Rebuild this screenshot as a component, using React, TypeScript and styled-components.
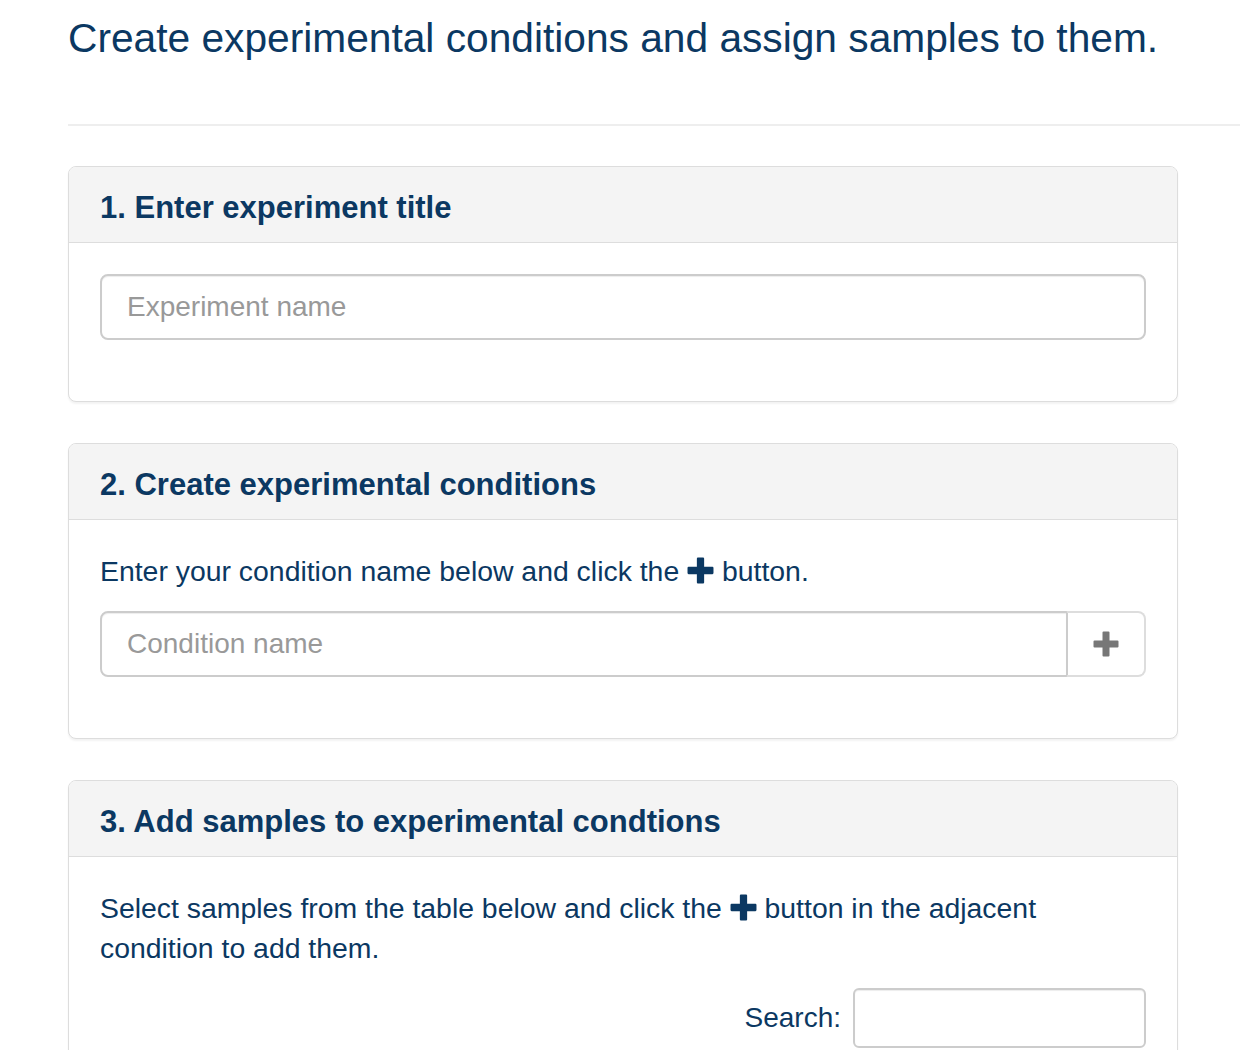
import React from 'react';
import styled, {createGlobalStyle} from "styled-components";

const GlobalStyle = createGlobalStyle`
  html, body {
    margin: 0;
    padding: 0;
    background: #fff;
  }
  body {
    font-family: "Liberation Sans", Arial, sans-serif;
    color: #0b3862;
    overflow: hidden;
  }
`

const ink = "#0b3862";

const PlusIcon = ({size, color}: { size: number, color: string }) => (
    <svg width={size} height={size} viewBox="0 0 26 26" aria-hidden="true">
      <path
          d="M9.5 1.5 Q9.5 0.5 10.5 0.5 H15.5 Q16.5 0.5 16.5 1.5 V9.5 H24.5 Q25.5 9.5 25.5 10.5 V15.5 Q25.5 16.5 24.5 16.5 H16.5 V24.5 Q16.5 25.5 15.5 25.5 H10.5 Q9.5 25.5 9.5 24.5 V16.5 H1.5 Q0.5 16.5 0.5 15.5 V10.5 Q0.5 9.5 1.5 9.5 H9.5 Z"
          fill={color}/>
    </svg>
);

const Panel = ({title, children}: { title: string, children: React.ReactNode }) => (
    <StyledPanel>
      <PanelHeading>
        <PanelTitle>{title}</PanelTitle>
      </PanelHeading>
      <PanelBody>{children}</PanelBody>
    </StyledPanel>
);

export default function App() {
  return (
      <Page>
        <GlobalStyle/>
        <PageTitle>Create experimental conditions and assign samples to them.</PageTitle>
        <Rule/>
        <Panels>
          <Panel title="1. Enter experiment title">
            <FormGroup>
              <TextInput placeholder="Experiment name"/>
            </FormGroup>
          </Panel>

          <Panel title="2. Create experimental conditions">
            <HelpText>
              Enter your condition name below and click the <InlineIcon><PlusIcon size={27} color={ink}/></InlineIcon> button.
            </HelpText>
            <FormGroup>
              <InputGroup>
                <TextInput $joined placeholder="Condition name"/>
                <AddonButton type="button">
                  <PlusIcon size={26} color="#777"/>
                </AddonButton>
              </InputGroup>
            </FormGroup>
          </Panel>

          <Panel title="3. Add samples to experimental condtions">
            <HelpText>
              Select samples from the table below and click the <InlineIcon><PlusIcon size={27} color={ink}/></InlineIcon> button in the adjacent
              <br/>condition to add them.
            </HelpText>
            <SearchRow>
              <SearchLabel>
                Search:
                <SearchInput type="search"/>
              </SearchLabel>
            </SearchRow>
          </Panel>
        </Panels>
      </Page>
  );
}

const Page = styled.div`
  padding-left: 68px;
  min-height: 1050px;
  box-sizing: border-box;
`

const PageTitle = styled.h1`
  margin: 16px 0 0;
  font-size: 40.7px;
  font-weight: 400;
  line-height: 44px;
  color: ${ink};
`

const Rule = styled.hr`
  margin: 64px 0 0;
  border: 0;
  border-top: 2px solid #eee;
`

const Panels = styled.div`
  width: 1110px;
  padding-top: 40px;
  display: flex;
  flex-direction: column;
  gap: 41px;
`

const StyledPanel = styled.section`
  border: 1px solid #ddd;
  border-radius: 8px;
  background: #fff;
  box-shadow: 0 2px 2px rgba(0, 0, 0, .05);
  overflow: hidden;
`

const PanelHeading = styled.div`
  background: #f4f4f4;
  border-bottom: 1px solid #ddd;
  padding: 23px 31px 16px;
`

const PanelTitle = styled.h3`
  margin: 0;
  font-size: 31px;
  font-weight: 700;
  line-height: 36px;
  color: ${ink};
`

const PanelBody = styled.div`
  padding: 31px 31px;
`

const FormGroup = styled.div`
  margin-bottom: 30px;
`

const HelpText = styled.p`
  margin: 0 0 20px;
  font-size: 28.4px;
  line-height: 40px;
  color: ${ink};
`

const InlineIcon = styled.span`
  display: inline-block;
  vertical-align: -3px;
  line-height: 0;
`

const InputGroup = styled.div`
  display: flex;
`

const TextInput = styled.input<{ $joined?: boolean }>`
  flex: 1;
  width: 100%;
  box-sizing: border-box;
  height: 66px;
  padding: 0 25px;
  font-family: "Liberation Sans", Arial, sans-serif;
  font-size: 28px;
  color: #555;
  border: 2px solid #ccc;
  border-radius: ${p => p.$joined ? "8px 0 0 8px" : "8px"};
  box-shadow: inset 0 1px 1px rgba(0, 0, 0, .075);
  outline: none;

  &::placeholder {
    color: #999;
  }
`

const AddonButton = styled.button`
  width: 80px;
  height: 66px;
  margin-left: -2px;
  display: flex;
  align-items: center;
  justify-content: center;
  background: #fff;
  border: 2px solid #ddd;
  border-left-color: #ccc;
  border-radius: 0 8px 8px 0;
  padding: 0;
`

const SearchRow = styled.div`
  display: flex;
  justify-content: flex-end;
`

const SearchLabel = styled.label`
  display: flex;
  align-items: center;
  gap: 12px;
  font-size: 28px;
  color: ${ink};
`

const SearchInput = styled.input`
  width: 293px;
  height: 60px;
  box-sizing: border-box;
  border: 2px solid #ccc;
  border-radius: 6px;
  box-shadow: inset 0 1px 1px rgba(0, 0, 0, .075);
  outline: none;
`
